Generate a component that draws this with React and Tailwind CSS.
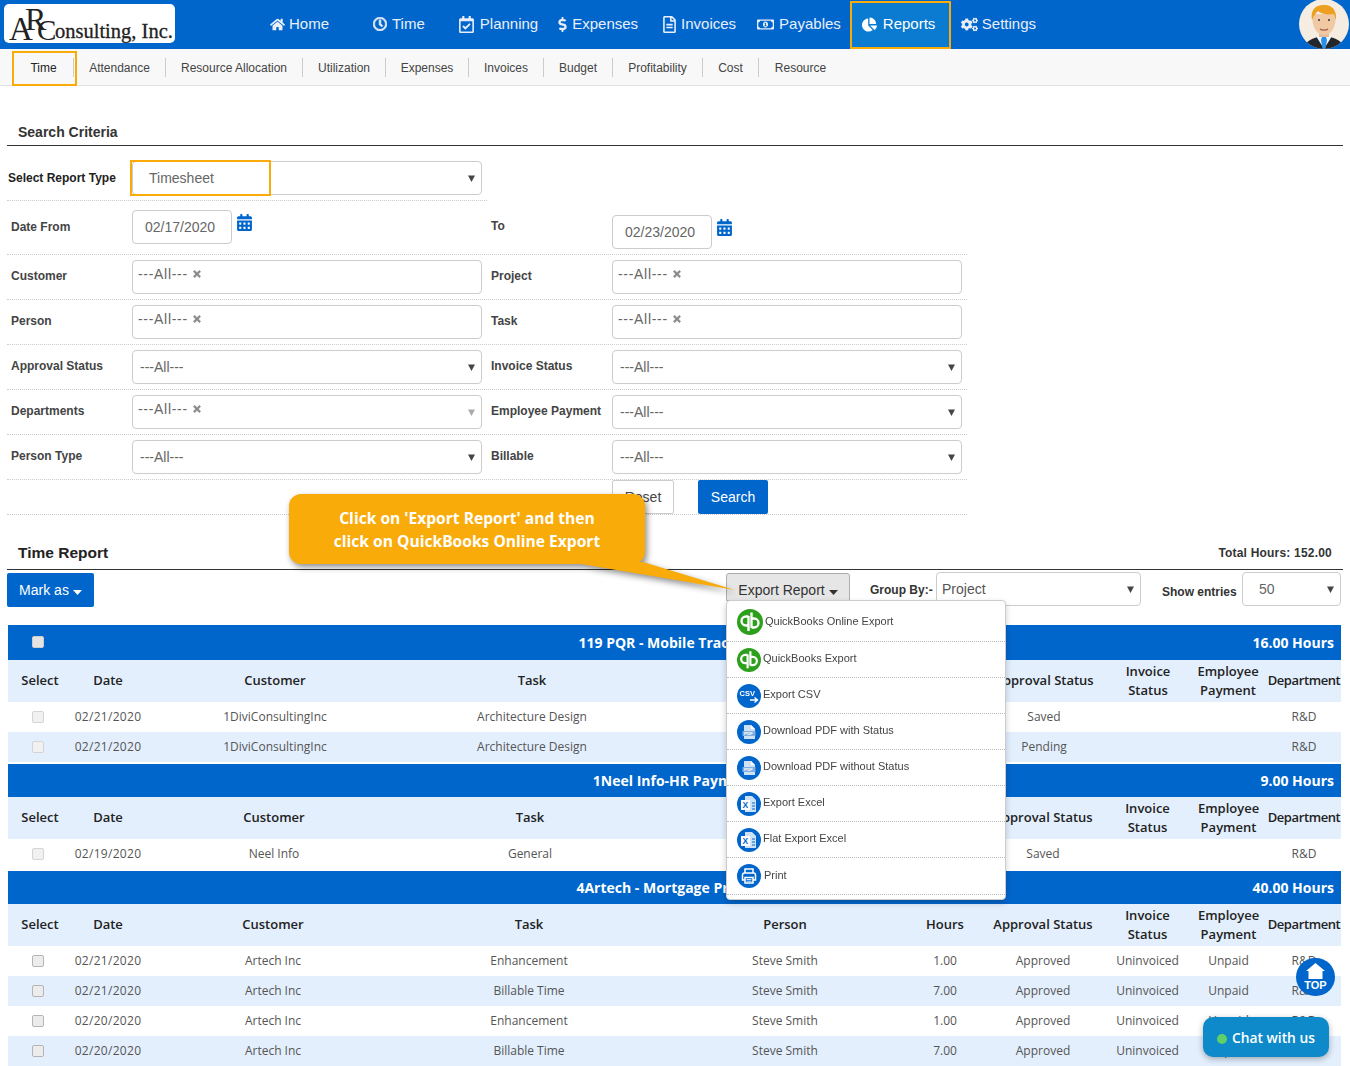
import React from 'react';
import { FaHome, FaRegClock, FaRegCalendarCheck, FaDollarSign, FaRegFileAlt, FaRegMoneyBillAlt, FaChartPie, FaCogs, FaCalendarAlt, FaTimes } from 'react-icons/fa';

const navItems = [
  { label: 'Home', icon: <FaHome size={15} />, cls: 'ml-[95px] gap-[4px]' },
  { label: 'Time', icon: <FaRegClock size={14} strokeWidth={30} />, cls: 'ml-[44px] gap-[5px]' },
  { label: 'Planning', icon: <FaRegCalendarCheck size={17} />, cls: 'ml-[33px] gap-[5px]' },
  { label: 'Expenses', icon: <FaDollarSign size={15} />, cls: 'ml-[17px] gap-[2px]' },
  { label: 'Invoices', icon: <FaRegFileAlt size={17} />, cls: 'ml-[23px] gap-[3px]' },
  { label: 'Payables', icon: <FaRegMoneyBillAlt size={17} />, cls: 'ml-[21px] gap-[5px]' },
];

const subItems = [
  { label: 'Time', cls: 'w-[60px] border-r text-[#222]' },
  { label: 'Attendance', cls: 'w-[92px] border-r' },
  { label: 'Resource Allocation', cls: 'w-[137px] border-r' },
  { label: 'Utilization', cls: 'w-[83px] border-r' },
  { label: 'Expenses', cls: 'w-[83px] border-r' },
  { label: 'Invoices', cls: 'w-[75px] border-r' },
  { label: 'Budget', cls: 'w-[69px] border-r' },
  { label: 'Profitability', cls: 'w-[90px] border-r' },
  { label: 'Cost', cls: 'w-[56px] border-r' },
  { label: 'Resource', cls: 'w-[83px]' },
];

const Caret = ({ light }) => (
  <svg width="7" height="7" viewBox="0 0 7 7" className="absolute right-[6px] top-[13px]">
    <path d="M0 0.5h7L3.5 7z" fill={light ? '#aaaaaa' : '#444444'} />
  </svg>
);

const SelectBox = ({ value, light, w = 'w-[350px]' }) => (
  <div className={`relative ${w} h-[34px] shrink-0 border border-[#ccc] rounded bg-white pl-[7px] leading-[33px] text-[14px] text-[#666]`}>
    {value}
    <Caret light={light} />
  </div>
);

const MultiBox = ({ light }) => (
  <div className="relative w-[350px] h-[34px] shrink-0 border border-[#ccc] rounded bg-white pl-[5px] pt-[3px] flex items-start gap-[4px] text-[14px] text-[#666] tracking-[0.7px] leading-[20px]">
    ---All---
    <FaTimes size={10} strokeWidth={30} className="text-[#888] mt-[5px]" />
    {light && <Caret light />}
  </div>
);

const DateBox = ({ value, cls = '' }) => (
  <div className={`flex items-start gap-[4px] w-[350px] shrink-0 ${cls}`}>
    <div className="w-[100px] h-[34px] border border-[#ccc] rounded bg-white pr-[4px] text-center leading-[33px] text-[14px] text-[#666]">{value}</div>
    <FaCalendarAlt size={17} className="text-[#0066cc] mt-[4px]" />
  </div>
);

const Label = ({ children, cls = 'w-[125px] pl-[4px]' }) => (
  <div className={`${cls} shrink-0 mb-[2px] text-[12px] font-bold text-[#444]`}>{children}</div>
);

const FormRow = ({ children, cls = 'h-[45px]' }) => (
  <div className={`flex items-center border-b border-dotted border-[#ccc] ${cls}`}>{children}</div>
);

const QbIcon = ({ size }) => (
  <svg width={size} height={size} viewBox="0 0 26 26" className="shrink-0">
    <circle cx="13" cy="13" r="13" fill="#2ca01c" />
    <g fill="none" stroke="#fff" strokeWidth="2.4">
      <path d="M11.5 7v15M11.5 7.500H9a4.500 4.500 0 0 0 0 9h2.500" />
      <path d="M14.5 3.500V19M14.500 9.500H17a4.500 4.500 0 0 1 0 9h-2.500" />
    </g>
  </svg>
);

const BlueCircle = ({ children }) => (
  <svg width="24" height="24" viewBox="0 0 24 24" className="shrink-0">
    <circle cx="12" cy="12" r="12" fill="#0066cc" />
    {children}
  </svg>
);

const CsvIcon = () => (
  <BlueCircle>
    <text x="2.5" y="12" fontSize="7.5" fontWeight="700" fill="#fff" fontFamily="Liberation Sans, sans-serif">CSV</text>
    <path d="M13 16h7M17.5 13.5l3 2.5-3 2.500" stroke="#fff" strokeWidth="1.4" fill="none" />
  </BlueCircle>
);

const PdfIcon = () => (
  <BlueCircle>
    <path d="M7 5h7l4 4v10H7z" fill="#cfe1f5" />
    <path d="M14 5v4h4" fill="#fff" />
    <rect x="5.5" y="11" width="13" height="5" fill="#7faee0" />
    <text x="7" y="15" fontSize="4.4" fontWeight="700" fill="#fff" fontFamily="Liberation Sans, sans-serif">PDF</text>
  </BlueCircle>
);

const ExcelIcon = () => (
  <BlueCircle>
    <path d="M8 4h7l4 4v12H8z" fill="#cfe1f5" />
    <rect x="4" y="8" width="9" height="10" fill="#fff" />
    <text x="5.4" y="16" fontSize="8.5" fontWeight="700" fill="#0066cc" fontFamily="Liberation Sans, sans-serif">X</text>
    <path d="M15 11h3M15 14h3M15 17h3" stroke="#0066cc" strokeWidth="1" />
  </BlueCircle>
);

const PrintIcon = () => (
  <BlueCircle>
    <g fill="none" stroke="#fff" strokeWidth="1.5">
      <path d="M8 9V5h8v4" />
      <path d="M8 16H5.500v-5a2 2 0 0 1 2-2h9a2 2 0 0 1 2 2v5H16" />
      <path d="M8 13.500h8V19H8z" />
    </g>
    <path d="M9.500 15.500h5M9.500 17.200h5" stroke="#fff" strokeWidth="0.8" />
  </BlueCircle>
);

const menuItems = [
  { label: 'QuickBooks Online Export', icon: <QbIcon size={26} />, cls: 'h-[41px] gap-[2px] pt-[2px]', text: 'mb-[1px]' },
  { label: 'QuickBooks Export', icon: <QbIcon size={24} />, cls: 'h-[36px] gap-[2px]', text: 'mb-[3px]' },
  { label: 'Export CSV', icon: <CsvIcon />, cls: 'h-[36px] gap-[2px]', text: 'mb-[3px]' },
  { label: 'Download PDF with Status', icon: <PdfIcon />, cls: 'h-[36px] gap-[2px]', text: 'mb-[3px]' },
  { label: 'Download PDF without Status', icon: <PdfIcon />, cls: 'h-[36px] gap-[2px]', text: 'mb-[3px]' },
  { label: 'Export Excel', icon: <ExcelIcon />, cls: 'h-[36px] gap-[2px]', text: 'mb-[3px]' },
  { label: 'Flat Export Excel', icon: <ExcelIcon />, cls: 'h-[36px] gap-[2px]', text: 'mb-[3px]' },
  { label: 'Print', icon: <PrintIcon />, cls: 'h-[37px] gap-[3px]', text: 'mb-[1px]' },
];

const ExportMenu = () => (
  <div className="absolute left-0 top-[27px] z-30 w-[280px] h-[300px] bg-white border border-[#ccc] rounded shadow-[0_3px_6px_rgba(0,0,0,0.2)] text-[11px] text-[#444]">
    {menuItems.map((m) => (
      <div key={m.label} className={`flex items-center pl-[10px] border-b border-dotted border-[#bbb] ${m.cls}`}>
        {m.icon}
        <span className={m.text}>{m.label}</span>
      </div>
    ))}
  </div>
);

const columns = ['Select', 'Date', 'Customer', 'Task', 'Person', 'Hours', 'Approval Status', <>Invoice<br />Status</>, <>Employee<br />Payment</>, 'Department'];

const colPad = ['', '', '', '', '', '', '', '', 'pl-[8px]', 'pl-[3px]'];

const Group = ({ title, hours, showCheck, titleCls, titlePad, cols, rows, checkCls }) => (
  <table className="w-[1333px] table-fixed border-collapse">
    <colgroup>{cols.map((c, i) => <col key={i} className={c} />)}</colgroup>
    <thead>
      <tr className="bg-[#0066cc] text-white">
        <th colSpan={10} className={`p-0 ${titleCls}`}>
          <div className="grid grid-cols-[1fr_auto_1fr] items-center font-['Open_Sans',sans-serif] font-bold text-[14px]">
            <div className="pl-[24px]">{showCheck && <div className="w-[12px] h-[12px] bg-[#e4e4e4] border border-[#ccc] rounded-[2px] mb-[2px]" />}</div>
            <div className={titlePad}>{title}</div>
            <div className="text-right pr-[7px]">{hours}</div>
          </div>
        </th>
      </tr>
      <tr className="bg-[#e3effd] h-[42px]">
        {columns.map((c, i) => (
          <th key={i} className={`p-0 pb-[1px] text-center align-middle font-semibold text-[13px] leading-[19px] text-[#222] whitespace-nowrap ${colPad[i]} ${i === 9 ? 'tracking-[-0.4px]' : ''}`}>{c}</th>
        ))}
      </tr>
    </thead>
    <tbody>
      {rows.map((r, i) => (
        <tr key={i} className={`h-[30px] text-center text-[12px] text-[#555] ${i % 2 ? 'bg-[#e3effd]' : 'bg-white'}`}>
          <td className="p-0 pl-[24px]"><div className={`w-[12px] h-[12px] rounded-[2px] border ${checkCls}`} /></td>
          {r.map((v, j) => (
            <td key={j} className={`whitespace-nowrap p-0 ${colPad[j + 1]} ${j === 0 ? 'tracking-[0.3px]' : ''}`}>{v}</td>
          ))}
        </tr>
      ))}
    </tbody>
  </table>
);

const Logo = () => (
  <div className="relative w-[171px] h-[39px] ml-[4px] mt-[4px] bg-white rounded-[5px] overflow-hidden font-['Liberation_Serif',serif] text-[#222]">
    <span className="absolute left-[5px] top-[11px] text-[33px] leading-[28px]">A</span>
    <span className="absolute left-[21px] top-[1px] text-[32px] leading-[28px]">R</span>
    <span className="absolute left-[33px] top-[13px] text-[29px] leading-[26px]">C</span>
    <span className="absolute left-[51px] top-[17px] text-[20.5px] leading-[20px] [-webkit-text-stroke:0.3px_#222] whitespace-nowrap">onsulting, Inc.</span>
  </div>
);

const Avatar = () => (
  <svg width="50" height="49" viewBox="0 0 50 49" className="shrink-0 mr-[1px]">
    <defs><clipPath id="av"><circle cx="25" cy="24" r="25" /></clipPath></defs>
    <g clipPath="url(#av)">
      <rect width="50" height="49" fill="#f5ede2" />
      <path d="M4 49c2-8 10-11 15-12h12c5 1 13 4 15 12z" fill="#23262b" />
      <path d="M17 36l8 13 8-13z" fill="#eef6ff" />
      <path d="M23 37h4l1 3-1.500 9h-3L22 40z" fill="#2a8fe6" />
      <rect x="20" y="28" width="10" height="9" fill="#e6bb95" />
      <path d="M13 14c0 14 5 21 12 21s12-7 12-21z" fill="#f0c9a4" />
      <path d="M13 20c-2-10 4-15 11-15 8-1 14 4 13 15l-2-6c-6 1-13 0-16-3-2 2-4 4-6 9z" fill="#eda020" />
      <circle cx="20" cy="20" r="1" fill="#333" />
      <circle cx="30" cy="20" r="1" fill="#333" />
      <path d="M21 29c2 1.500 6 1.500 8 0" stroke="#a5594a" strokeWidth="1.400" fill="none" />
    </g>
  </svg>
);

export default function App() {
  return (
    <div className="relative w-[1350px] h-[1066px] overflow-hidden bg-white font-['Liberation_Sans',Arial,sans-serif]">
      {/* top bar */}
      <div className="flex items-start h-[49px] bg-[#0066cc] text-[15px] text-[#e9eff9]">
        <Logo />
        {navItems.map((n) => (
          <div key={n.label} className={`flex items-center h-[48px] ${n.cls}`}>
            {n.icon}
            <span>{n.label}</span>
          </div>
        ))}
        <div className="flex items-center gap-[6px] w-[101px] h-[48px] mt-[1px] ml-[9px] pl-[10px] pb-[2px] bg-[#0a7bd0] border-2 border-[#f9ab0a] text-white">
          <FaChartPie size={15} />
          <span>Reports</span>
        </div>
        <div className="flex items-center gap-[4px] h-[48px] ml-[10px]">
          <FaCogs size={17} />
          <span>Settings</span>
        </div>
        <div className="ml-auto"><Avatar /></div>
      </div>

      {/* sub nav */}
      <div className="relative flex items-center h-[37px] pl-[14px] bg-[#f8f8f8] border-b border-[#e2e2e2] text-[12px] text-[#444]">
        {subItems.map((s) => (
          <div key={s.label} className={`h-[19px] leading-[20px] text-center border-[#ccc] ${s.cls}`}>{s.label}</div>
        ))}
        <div className="absolute left-[12px] top-[2px] w-[65px] h-[35px] border-2 border-[#f9ab0a]" />
      </div>

      {/* search criteria */}
      <div className="mx-[7px] mt-[37px] pl-[11px] pb-[4px] border-b border-[#333] text-[14px] font-bold text-[#333] leading-[18px]">Search Criteria</div>

      <div className="ml-[7px] w-[960px] mt-[14px]">
        <div className="flex items-start w-[480px] h-[41px] border-b border-dotted border-[#ccc]">
          <div className="w-[125px] mt-[9px] pl-[1px] shrink-0 text-[12px] font-bold text-[#222]">Select Report Type</div>
          <div className="relative w-[350px] h-[34px] mt-[1px] border border-[#ccc] rounded bg-white pl-[16px] leading-[33px] text-[14px] text-[#666]">
            Timesheet
            <Caret />
            <div className="absolute left-[-3px] top-[-2px] w-[141px] h-[36px] border-2 border-[#f9ab0a]" />
          </div>
        </div>
        <FormRow cls="h-[54px]">
          <Label>Date From</Label>
          <DateBox value="02/17/2020" cls="mb-[1px]" />
          <Label cls="w-[130px] pl-[9px] mb-[4px]">To</Label>
          <DateBox value="02/23/2020" cls="mt-[8px]" />
        </FormRow>
        <FormRow>
          <Label>Customer</Label>
          <MultiBox />
          <Label cls="w-[130px] pl-[9px]">Project</Label>
          <MultiBox />
        </FormRow>
        <FormRow>
          <Label>Person</Label>
          <MultiBox />
          <Label cls="w-[130px] pl-[9px]">Task</Label>
          <MultiBox />
        </FormRow>
        <FormRow>
          <Label>Approval Status</Label>
          <SelectBox value="---All---" />
          <Label cls="w-[130px] pl-[9px]">Invoice Status</Label>
          <SelectBox value="---All---" />
        </FormRow>
        <FormRow>
          <Label>Departments</Label>
          <MultiBox light />
          <Label cls="w-[130px] pl-[9px]">Employee Payment</Label>
          <SelectBox value="---All---" />
        </FormRow>
        <FormRow>
          <Label>Person Type</Label>
          <SelectBox value="---All---" />
          <Label cls="w-[130px] pl-[9px]">Billable</Label>
          <SelectBox value="---All---" />
        </FormRow>
        <div className="flex h-[35px] pl-[605px] gap-[24px] border-b border-dotted border-[#ccc] text-[14px]">
          <div className="w-[62px] h-[34px] border border-[#ccc] rounded-[2px] text-center leading-[33px] text-[#444]">Reset</div>
          <div className="w-[70px] h-[34px] bg-[#0066cc] rounded-[2px] text-center leading-[34px] text-white">Search</div>
        </div>
      </div>

      {/* time report */}
      <div className="flex items-end justify-between mx-[7px] mt-[28px] pl-[11px] pr-[11px] pb-[6px] border-b border-[#333] leading-[20px]">
        <div className="text-[15.5px] font-bold text-[#222]">Time Report</div>
        <div className="text-[12px] font-bold tracking-[0.2px] text-[#333]">Total Hours: 152.00</div>
      </div>

      <div className="flex items-start ml-[7px] w-[1335px] mt-[2px] h-[53px]">
        <div className="flex items-center justify-center gap-[4px] w-[87px] h-[34px] mt-[1px] bg-[#0066cc] rounded-[2px] text-[14px] text-white">
          Mark as
          <svg width="9" height="5" viewBox="0 0 9 5" className="mt-[4px]"><path d="M0 0h9L4.500 5z" fill="#fff" /></svg>
        </div>
        <div className="relative ml-[632px] mt-[1px]">
          <div className="flex items-center justify-center gap-[4px] w-[124px] h-[28px] pt-[6px] bg-[#e6e6e6] border border-[#adadad] rounded-t-[3px] text-[14px] text-[#333]">
            Export Report
            <svg width="9" height="5" viewBox="0 0 9 5" className="mt-[4px]"><path d="M0 0h9L4.500 5z" fill="#333" /></svg>
          </div>
          <ExportMenu />
        </div>
        <div className="ml-[20px] w-[66px] mt-[9px] text-[12px] font-bold text-[#333]">Group By:-</div>
        <div className="relative w-[205px] h-[34px] shrink-0 border border-[#ccc] rounded bg-white pl-[5px] leading-[33px] text-[14px] text-[#555]">
          Project
          <Caret />
        </div>
        <div className="ml-[21px] w-[80px] mt-[11px] text-[12px] font-bold text-[#333]">Show entries</div>
        <div className="relative w-[99px] h-[34px] border border-[#ccc] rounded bg-white pl-[16px] leading-[33px] text-[14px] text-[#666]">
          50
          <Caret />
        </div>
      </div>

      {/* tables */}
      <div className="ml-[8px] font-['Open_Sans',sans-serif]">
        <Group
          title="119 PQR - Mobile Tracking"
          hours="16.00 Hours"
          showCheck
          titleCls="h-[35px]"
          titlePad="pr-[12px]"
          cols={['w-[64px]', 'w-[72px]', 'w-[262px]', 'w-[252px]', 'w-[256px]', 'w-[62px]', 'w-[136px]', 'w-[72px]', 'w-[80px]', 'w-[77px]']}
          checkCls="bg-[#f1f1f1] border-[#d4d4d4]"
          rows={[
            ['02/21/2020', '1DiviConsultingInc', 'Architecture Design', 'Steve Smith', '8.00', 'Saved', '', '', 'R&D'],
            ['02/21/2020', '1DiviConsultingInc', 'Architecture Design', 'Steve Smith', '8.00', 'Pending', '', '', 'R&D'],
          ]}
        />
        <div className="h-[2px]" />
        <Group
          title="1Neel Info-HR Payments"
          hours="9.00 Hours"
          titleCls="h-[33px]"
          titlePad="pl-[6px]"
          cols={['w-[64px]', 'w-[72px]', 'w-[260px]', 'w-[252px]', 'w-[258px]', 'w-[62px]', 'w-[134px]', 'w-[75px]', 'w-[79px]', 'w-[77px]']}
          checkCls="bg-[#f1f1f1] border-[#d4d4d4]"
          rows={[
            ['02/19/2020', 'Neel Info', 'General', 'Steve Smith', '9.00', 'Saved', '', '', 'R&D'],
          ]}
        />
        <div className="h-[2px]" />
        <Group
          title="4Artech - Mortgage Product"
          hours="40.00 Hours"
          titleCls="h-[33px]"
          titlePad="pr-[4px]"
          cols={['w-[64px]', 'w-[72px]', 'w-[258px]', 'w-[254px]', 'w-[258px]', 'w-[62px]', 'w-[134px]', 'w-[75px]', 'w-[79px]', 'w-[77px]']}
          checkCls="bg-[#ececec] border-[#b5b5b5]"
          rows={[
            ['02/21/2020', 'Artech Inc', 'Enhancement', 'Steve Smith', '1.00', 'Approved', 'Uninvoiced', 'Unpaid', 'R&D'],
            ['02/21/2020', 'Artech Inc', 'Billable Time', 'Steve Smith', '7.00', 'Approved', 'Uninvoiced', 'Unpaid', 'R&D'],
            ['02/20/2020', 'Artech Inc', 'Enhancement', 'Steve Smith', '1.00', 'Approved', 'Uninvoiced', 'Unpaid', 'R&D'],
            ['02/20/2020', 'Artech Inc', 'Billable Time', 'Steve Smith', '7.00', 'Approved', 'Uninvoiced', 'Unpaid', 'R&D'],
          ]}
        />
      </div>

      {/* callout */}
      <div className="absolute left-[289px] top-[494px] z-20 drop-shadow-[2px_3px_3px_rgba(0,0,0,0.45)]">
        <div className="w-[356px] h-[70px] pt-[2px] bg-[#f9ab0a] rounded-[12px] flex items-center justify-center text-center font-['Open_Sans',sans-serif] font-bold text-[15.6px] leading-[23px] text-white">
          <div>Click on 'Export Report' and then<br />click on QuickBooks Online Export</div>
        </div>
        <svg width="170" height="30" viewBox="0 0 170 30" className="absolute left-[280px] top-[68px]">
          <path d="M0 0L166 28 74 0z" fill="#f9ab0a" />
        </svg>
      </div>

      {/* floating buttons */}
      <div className="absolute left-[1296px] top-[958px] z-30 flex flex-col items-center w-[39px] h-[38px] rounded-full bg-[#0066cc] text-white text-[11px] font-bold leading-[11px] pt-[5px]">
        <svg width="19" height="16" viewBox="0 0 19 16"><path d="M9.500 0L19 8h-2.500v8h-14V8H0z" fill="#fff" /></svg>
        <span className="mt-[1px]">TOP</span>
      </div>
      <div className="absolute left-[1203px] top-[1017px] z-30 flex items-center gap-[5px] w-[126px] h-[40px] pl-[14px] pt-[3px] rounded-[10px] bg-[#0e8acb] shadow-[0_2px_6px_rgba(0,0,0,0.3)] font-['Open_Sans',sans-serif] font-semibold text-[13.8px] text-white">
        <span className="w-[10px] h-[10px] rounded-full bg-[#5fd068]" />
        Chat with us
      </div>
    </div>
  );
}
